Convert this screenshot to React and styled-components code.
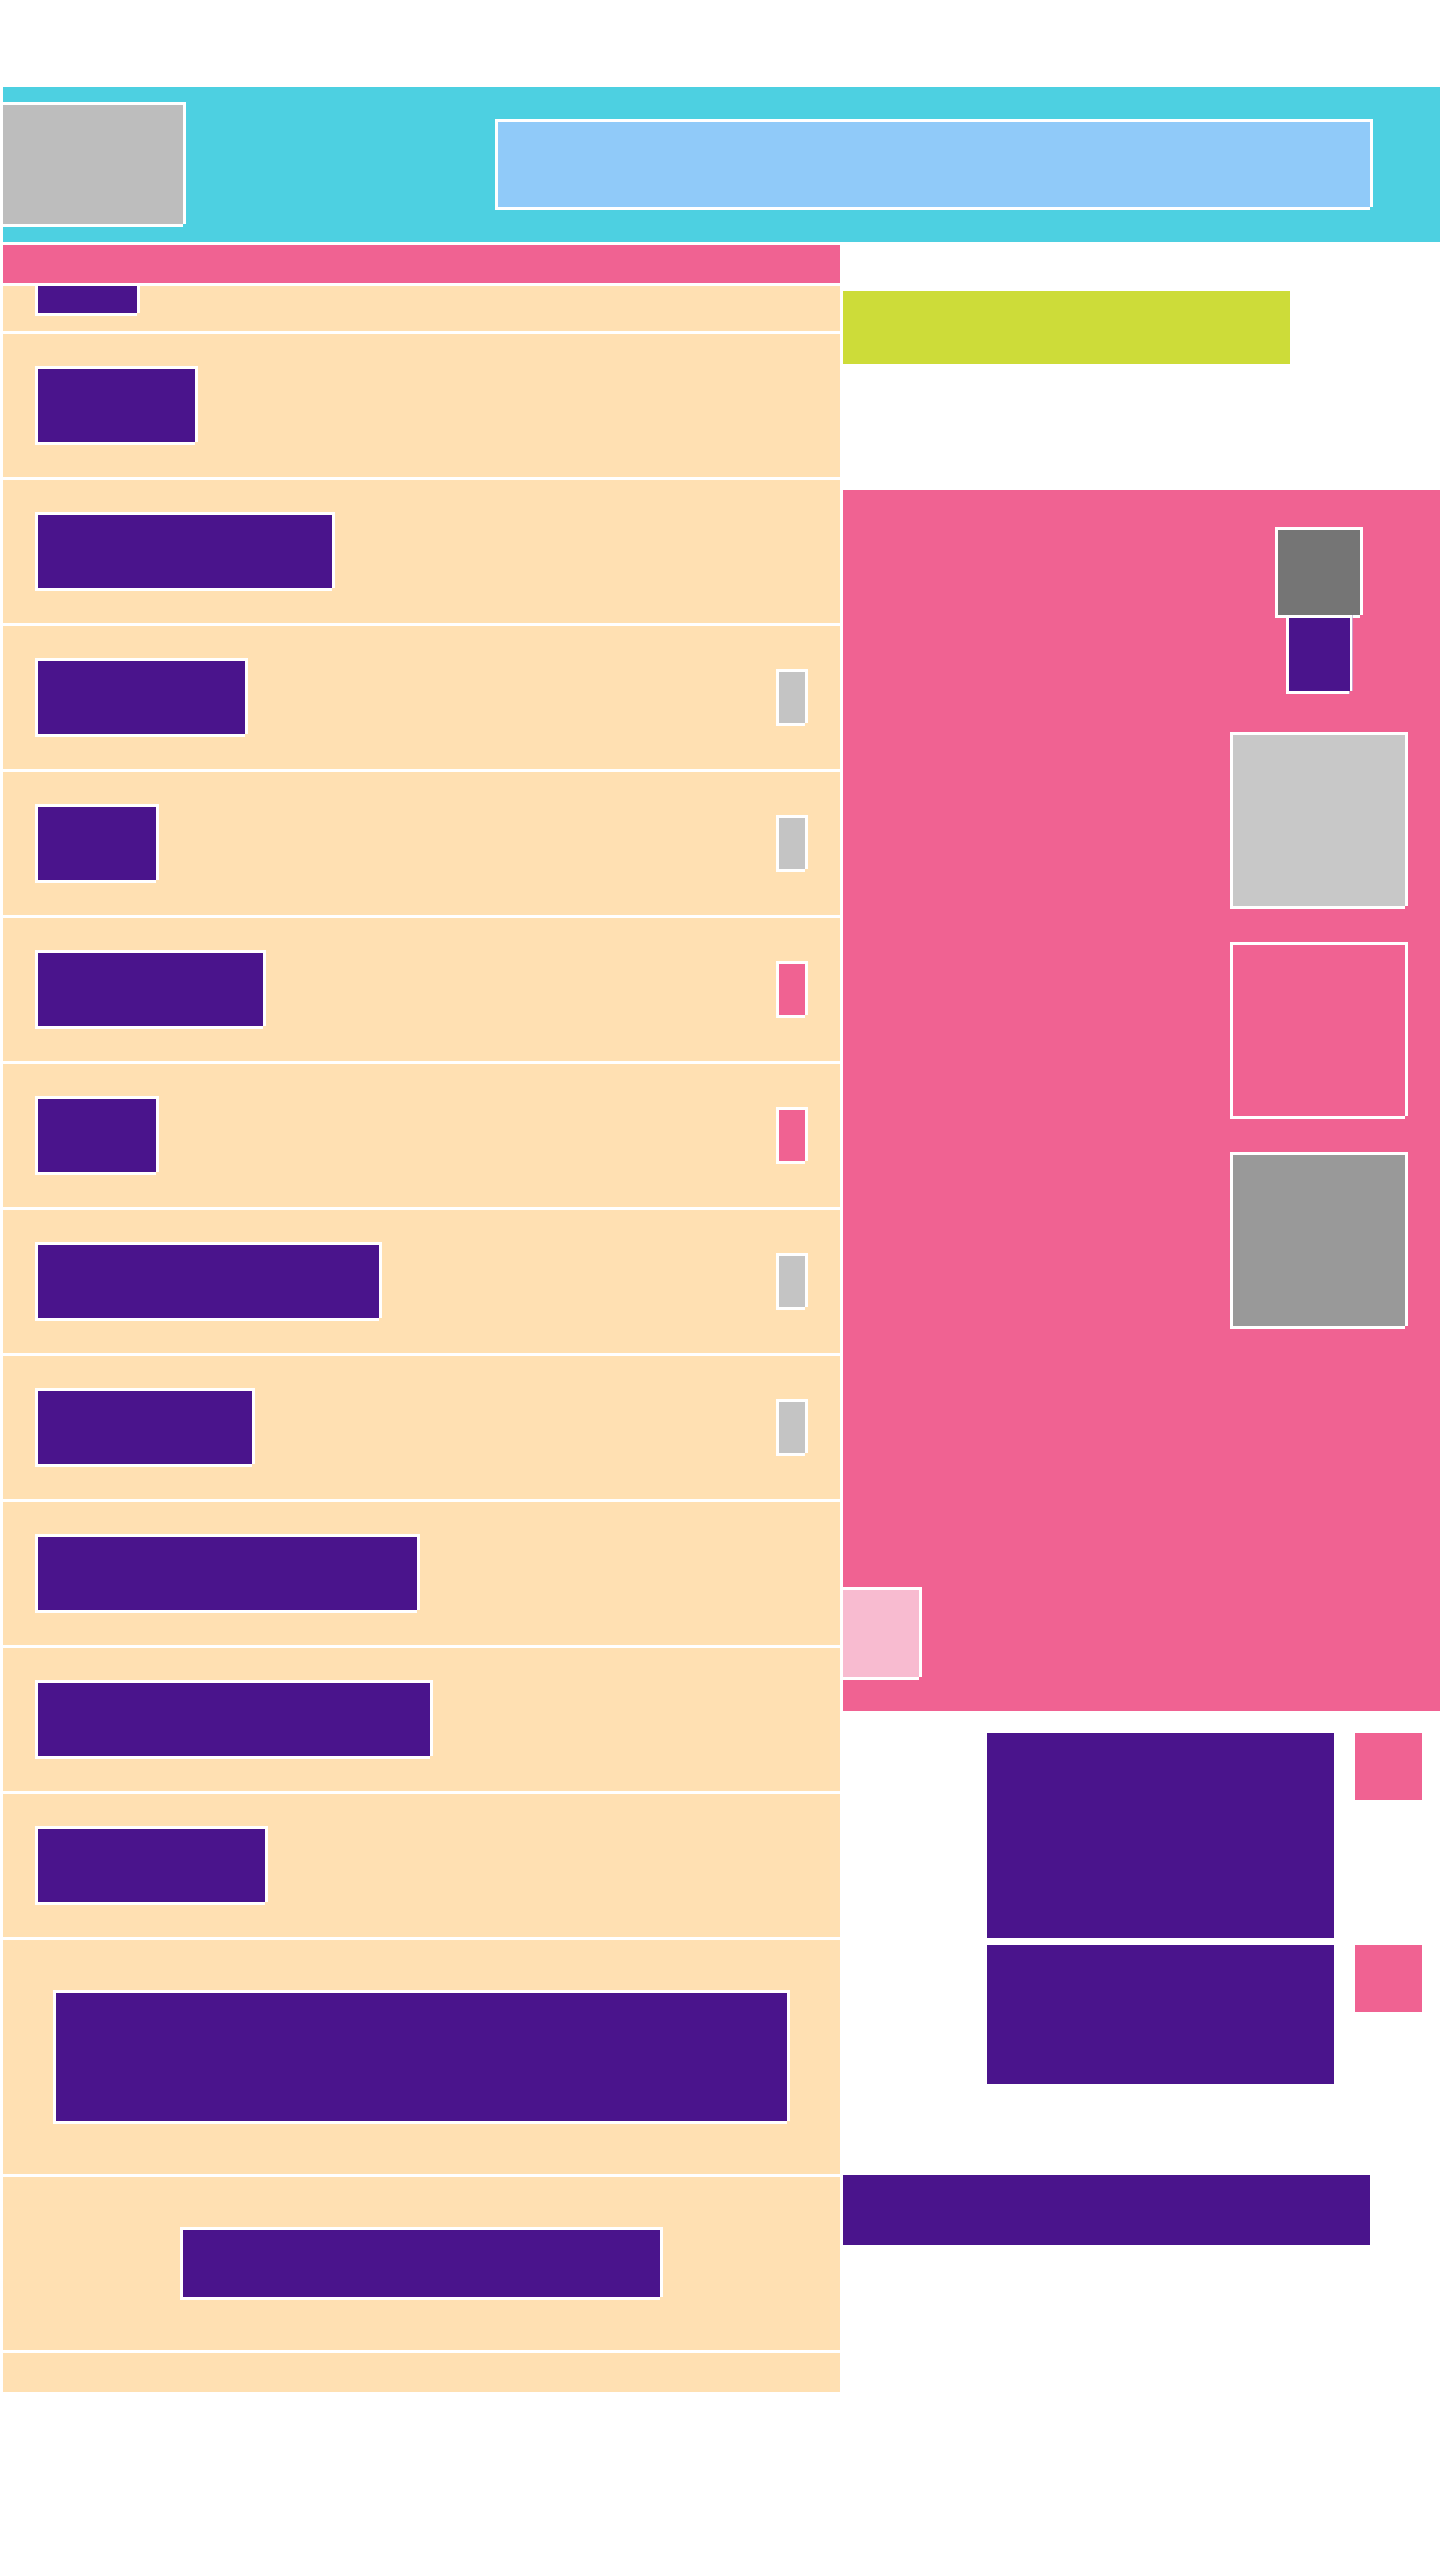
import React from 'react'
import styled, { createGlobalStyle, css } from 'styled-components'

const GlobalStyle = createGlobalStyle`
  * { box-sizing: border-box; }
  body {
    margin: 0;
    background: #fff;
    font-family: "Liberation Sans", Arial, sans-serif;
  }
`

// white frame with the bottom right corner cut off, as in the wireframe
const framed = css`
  border: 3px solid #fff;
  clip-path: polygon(0 0, 100% 0, 100% calc(100% - 3px), calc(100% - 3px) calc(100% - 3px), calc(100% - 3px) 100%, 0 100%);
`

const PURPLE = '#4a148c'
const PINK = '#f06292'
const TAN = '#ffe0b2'

const Page = styled.div`
  padding: 87px 0 168px 3px;
`

const Header = styled.header`
  display: flex;
  align-items: center;
  justify-content: space-between;
  height: 155px;
  padding-right: 67px;
  background: #4dd0e1;
`
const Logo = styled.div`
  ${framed};
  width: 186px;
  height: 125px;
  margin-left: -3px;
  background: #bdbdbd;
`
const Search = styled.div`
  ${framed};
  width: 878px;
  height: 91px;
  background: #90caf9;
`

const Layout = styled.div`
  display: grid;
  grid-template-columns: 837px 597px;
  column-gap: 3px;
  margin-top: 3px;
  align-items: start;
`

const ListColumn = styled.div`
  display: flex;
  flex-direction: column;
  gap: 3px;
`
const ListHeader = styled.div`
  height: 38px;
  background: ${PINK};
`
const Row = styled.div`
  display: flex;
  align-items: center;
  justify-content: ${(p) => (p.$center ? 'center' : 'space-between')};
  height: ${(p) => p.$height || 143}px;
  padding: 0 32px;
  background: ${TAN};
`
const ClippedRow = styled(Row)`
  align-items: flex-start;
  overflow: hidden;
`
const Label = styled.div`
  ${framed};
  width: ${(p) => p.$width}px;
  height: 79px;
  margin-top: ${(p) => p.$offset || 0}px;
  background: ${PURPLE};
`
const Toggle = styled.div`
  ${framed};
  width: 32px;
  height: 57px;
  background: ${(p) => (p.$on ? PINK : '#c4c4c4')};
`
const Block = styled.div`
  ${framed};
  width: ${(p) => p.$width}px;
  height: ${(p) => p.$height}px;
  background: ${PURPLE};
`

const SideColumn = styled.aside`
  display: flex;
  flex-direction: column;
`
const Banner = styled.div`
  width: 447px;
  height: 73px;
  margin-top: 46px;
  background: #cddc39;
`
const Panel = styled.section`
  display: flex;
  flex-direction: column;
  height: 1221px;
  margin-top: 126px;
  padding: 37px 32px 31px 0;
  background: ${PINK};
`
const PanelStack = styled.div`
  display: flex;
  flex-direction: column;
  align-items: center;
  align-self: flex-end;
  width: 178px;
`
const Avatar = styled.div`
  ${framed};
  width: 88px;
  height: 91px;
  background: #757575;
`
const AvatarBadge = styled.div`
  ${framed};
  width: 67px;
  height: 79px;
  margin-top: -3px;
  margin-bottom: 38px;
  background: ${PURPLE};
`
const Tile = styled.div`
  ${framed};
  width: 178px;
  height: 177px;
  margin-bottom: 33px;
  background: ${(p) => p.$color};
`
const Thumb = styled.div`
  ${framed};
  width: 82px;
  height: 93px;
  margin-top: auto;
  margin-left: -3px;
  background: #f8bbd0;
`

const Promos = styled.div`
  display: flex;
  flex-direction: column;
  gap: 7px;
  margin-top: 22px;
  padding: 0 18px 0 144px;
`
const PromoRow = styled.div`
  display: flex;
  align-items: flex-start;
  justify-content: space-between;
`
const PromoCard = styled.div`
  width: 347px;
  height: ${(p) => p.$height}px;
  background: ${PURPLE};
`
const PromoBadge = styled.div`
  width: 67px;
  height: 67px;
  background: ${PINK};
`
const FooterBar = styled.div`
  width: 527px;
  height: 70px;
  margin-top: 91px;
  background: ${PURPLE};
`

const ROWS = [
  { width: 163 },
  { width: 300 },
  { width: 213, toggle: 'off' },
  { width: 124, toggle: 'off' },
  { width: 231, toggle: 'on' },
  { width: 124, toggle: 'on' },
  { width: 347, toggle: 'off' },
  { width: 220, toggle: 'off' },
  { width: 385 },
  { width: 398 },
  { width: 233 }
]

export default function App () {
  return (
    <Page>
      <GlobalStyle />
      <Header>
        <Logo />
        <Search />
      </Header>
      <Layout>
        <ListColumn>
          <ListHeader />
          <ClippedRow $height={45}>
            <Label $width={105} $offset={-49} />
          </ClippedRow>
          {ROWS.map((row, index) => (
            <Row key={index}>
              <Label $width={row.width} />
              {row.toggle && <Toggle $on={row.toggle === 'on'} />}
            </Row>
          ))}
          <Row $height={234} $center>
            <Block $width={737} $height={134} />
          </Row>
          <Row $height={173} $center>
            <Block $width={483} $height={73} />
          </Row>
          <Row $height={39} />
        </ListColumn>
        <SideColumn>
          <Banner />
          <Panel>
            <PanelStack>
              <Avatar />
              <AvatarBadge />
              <Tile $color="#c8c8c8" />
              <Tile $color={PINK} />
              <Tile $color="#999999" />
            </PanelStack>
            <Thumb />
          </Panel>
          <Promos>
            <PromoRow>
              <PromoCard $height={205} />
              <PromoBadge />
            </PromoRow>
            <PromoRow>
              <PromoCard $height={139} />
              <PromoBadge />
            </PromoRow>
          </Promos>
          <FooterBar />
        </SideColumn>
      </Layout>
    </Page>
  )
}
